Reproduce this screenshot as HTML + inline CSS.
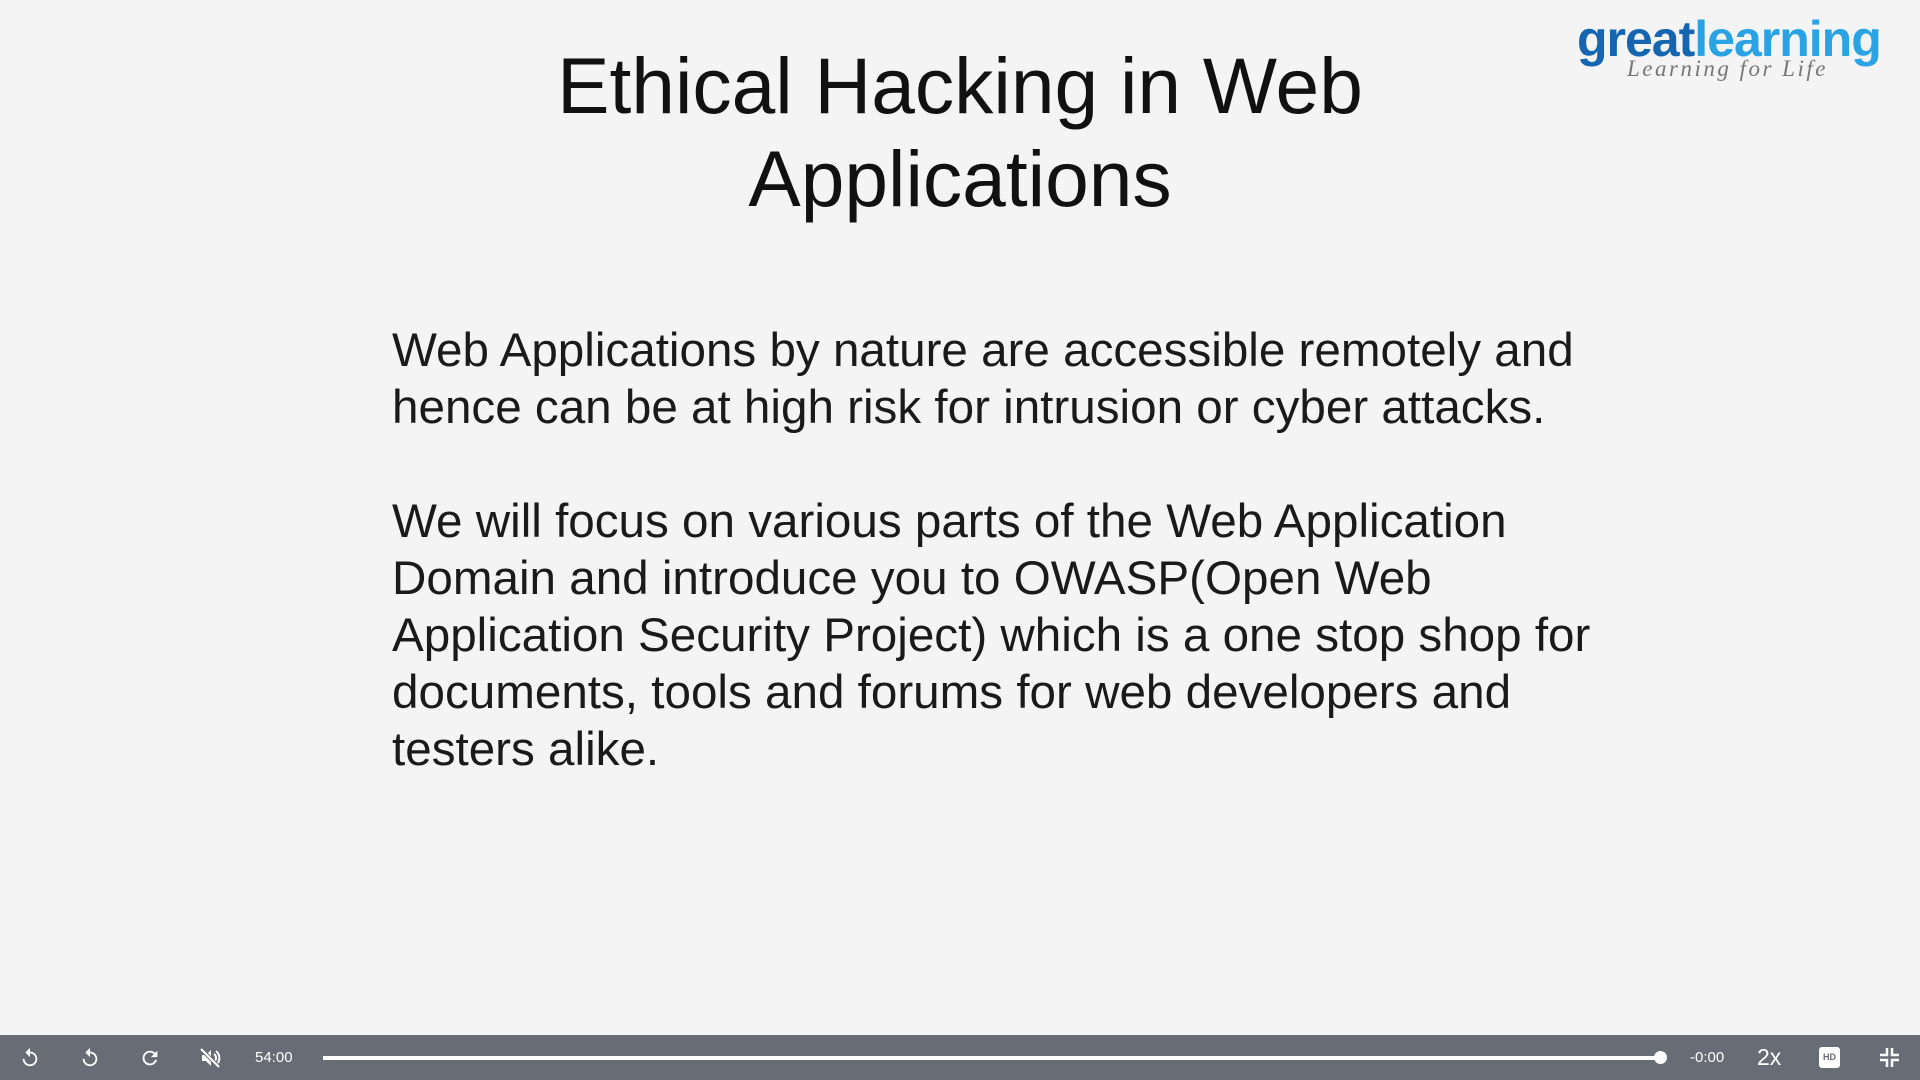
<!DOCTYPE html>
<html><head><meta charset="utf-8"><style>
html,body{margin:0;padding:0;width:1920px;height:1080px;overflow:hidden;background:#f4f4f4;font-family:"Liberation Sans",sans-serif;}
.t{position:absolute;left:0;width:1920px;text-align:center;font-size:78.5px;color:#111;line-height:93px;top:40px;}
.b{position:absolute;left:392px;font-size:47.6px;color:#1a1a1a;line-height:57px;white-space:nowrap;}
.logo{position:absolute;left:1577px;top:10px;font-weight:bold;font-size:50px;letter-spacing:-1px;}
.tag{position:absolute;left:1627px;top:56px;font-family:"Liberation Serif",serif;font-style:italic;font-size:23px;color:#777;letter-spacing:2.5px;}
.bar{position:absolute;left:0;top:1035px;width:1920px;height:45px;background:#686d75;}
.w{position:absolute;color:#fff;}
</style></head><body>
<div class="t">Ethical Hacking in Web<br>Applications</div>
<div class="b" style="top:322px">Web Applications by nature are accessible remotely and<br>hence can be at high risk for intrusion or cyber attacks.</div>
<div class="b" style="top:493px">We will focus on various parts of the Web Application<br>Domain and introduce you to OWASP(Open Web<br>Application Security Project) which is a one stop shop for<br>documents, tools and forums for web developers and<br>testers alike.</div>
<div class="logo"><span style="color:#1565b0">great</span><span style="color:#29a3e3">learning</span></div>
<div class="tag">Learning for Life</div>
<div class="bar">
<svg class="w" style="left:19px;top:12px" width="22" height="22" viewBox="0 0 24 24"><path d="M12 5V1L7 6l5 5V7c3.3 0 6 2.7 6 6s-2.7 6-6 6-6-2.7-6-6H4c0 4.4 3.6 8 8 8s8-3.6 8-8-3.6-8-8-8z" fill="#fff"/></svg>
<svg class="w" style="left:79px;top:12px" width="22" height="22" viewBox="0 0 24 24"><path d="M12 5V1L7 6l5 5V7c3.3 0 6 2.7 6 6s-2.7 6-6 6-6-2.7-6-6H4c0 4.4 3.6 8 8 8s8-3.6 8-8-3.6-8-8-8z" fill="#fff"/></svg>
<svg class="w" style="left:139px;top:12px" width="22" height="22" viewBox="0 0 24 24"><path d="M17.6 6.4A8 8 0 1 0 19.7 14h-2.1A6 6 0 1 1 12 6c1.7 0 3.1.7 4.2 1.8L13 11h7V4z" fill="#fff"/></svg>
<svg class="w" style="left:198px;top:11px" width="24" height="24" viewBox="0 0 24 24"><path d="M4 9v6h4l5 5V4L8 9z" fill="#fff"/><path d="M16 8a5 5 0 0 1 0 8M18 5a9 9 0 0 1 0 14" stroke="#fff" stroke-width="2" fill="none"/><path d="M3 3l18 18" stroke="#686d75" stroke-width="4"/><path d="M3 3l18 18" stroke="#fff" stroke-width="2"/></svg>
<div class="w" style="left:255px;top:14px;font-size:15px">54:00</div>
<div style="position:absolute;left:323px;top:21px;width:1338px;height:4px;background:#fff"></div>
<div style="position:absolute;left:1654px;top:16px;width:13px;height:13px;border-radius:50%;background:#fff"></div>
<div class="w" style="left:1690px;top:14px;font-size:15px">-0:00</div>
<div class="w" style="left:1757px;top:9px;font-size:23px">2x</div>
<div style="position:absolute;left:1819px;top:12px;width:21px;height:21px;border-radius:3px;background:#fff;color:#686d75;font-size:9px;font-weight:bold;text-align:center;line-height:21px">HD</div>
<svg class="w" style="left:1880px;top:13px" width="19" height="19" viewBox="0 0 19 19"><path d="M7 0v7H0M12 0v7h7M7 19v-7H0M12 19v-7h7" stroke="#fff" stroke-width="2.5" fill="none"/></svg>
</div>
</body></html>
